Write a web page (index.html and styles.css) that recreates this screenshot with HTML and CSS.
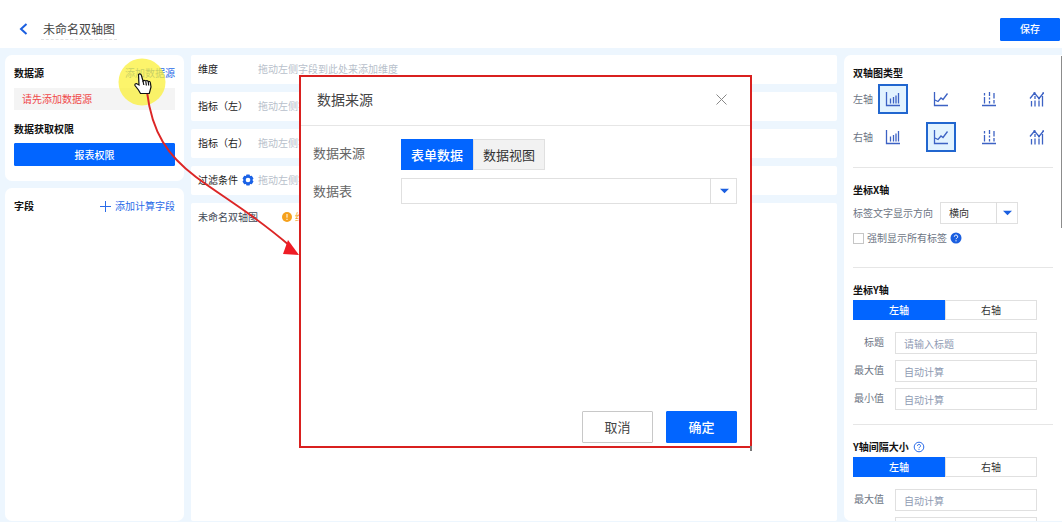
FILE: index.html
```html
<!DOCTYPE html>
<html lang="zh-CN">
<head>
<meta charset="utf-8">
<title>未命名双轴图</title>
<link rel="stylesheet" href="styles.css">
</head>

<body>

<svg class="symbols">
  <symbol id="bar" viewBox="0 0 16 16"><path d="M1.500 1v13.500H15M5.500 7.500v5M8.500 6v6.500M11 4.500v8M13.500 2v10.500"/></symbol>
  <symbol id="line" viewBox="0 0 16 16"><path d="M1.500 1v13.500H15M2 9l3 1.500 3-3.500 2 1.500L14.500 2.500"/></symbol>
  <symbol id="stack" viewBox="0 0 16 16"><path d="M1 14.500h14M3.500 2v2.500M3.500 6v6.500M8.500 1v4M8.500 6.500v2M8.500 10v2.500M13 2v5.500M13 9v3.500"/></symbol>
  <symbol id="combo" viewBox="0 0 16 16"><path d="M1 7.500L5.500 2l4.500 5.500L14.500 2M2.500 10v5.500M6 5v3M6 9.500v6M10 9.500v6M13.500 5v10.500"/><path d="M4.500 2h2M9 7.500h2M13.500 2h1.500"/></symbol>
  <symbol id="caret" viewBox="0 0 10 6"><path d="M0 .5h10L5 5.500z"/></symbol>
</svg>

<header>
  <button class="back" aria-label="返回"><svg width="9" height="12" viewBox="0 0 9 12"><path d="M7.500 1L2 6l5.500 5"/></svg></button>
  <h1>未命名双轴图</h1>
  <button class="primary save">保存</button>
</header>

<main>
  <aside class="left">
    <section class="panel source">
      <div class="head"><h2>数据源</h2><a href="#">添加数据源</a></div>
      <p class="warn">请先添加数据源</p>
      <h2>数据获取权限</h2>
      <button class="primary wide">报表权限</button>
    </section>
    <section class="panel fields">
      <div class="head">
        <h2>字段</h2>
        <a href="#"><svg width="11" height="11" viewBox="0 0 11 11"><path d="M5.500 0v11M0 5.500h11"/></svg>添加计算字段</a>
      </div>
    </section>
  </aside>

  <div class="middle">
    <div class="drop"><b>维度</b><span>拖动左侧字段到此处来添加维度</span></div>
    <div class="drop"><b>指标（左）</b><span>拖动左侧字段</span></div>
    <div class="drop"><b>指标（右）</b><span>拖动左侧字段</span></div>
    <div class="drop">
      <b>过滤条件 <svg class="gear" width="12" height="12" viewBox="0 0 12 12"><path d="M4.500 .5h3l.6 1.600 1.700-.3 1.700 2.700L10.400 6l1.100 1.500-1.700 2.700-1.700-.3-.6 1.600h-3l-.6-1.600-1.700.3L.5 7.500 1.600 6 .5 4.500l1.700-2.700 1.700.3z"/><circle cx="6" cy="6" r="2.300"/></svg></b>
      <span>拖动左侧字段</span>
    </div>
    <div class="chart">
      <span>未命名双轴图</span>
      <em><svg width="10" height="10" viewBox="0 0 10 10"><circle cx="5" cy="5" r="5"/><path d="M5 2v3.700M5 6.800V8"/></svg>维度</em>
    </div>
  </div>

  <aside class="panel right">
    <section>
      <h2>双轴图类型</h2>
      <div class="types">
        <span>左轴</span>
        <button class="on" aria-label="柱形图"><svg><use href="#bar"/></svg></button>
        <button aria-label="折线图"><svg><use href="#line"/></svg></button>
        <button aria-label="堆积图"><svg><use href="#stack"/></svg></button>
        <button aria-label="组合图"><svg><use href="#combo"/></svg></button>
      </div>
      <div class="types">
        <span>右轴</span>
        <button aria-label="柱形图"><svg><use href="#bar"/></svg></button>
        <button class="on" aria-label="折线图"><svg><use href="#line"/></svg></button>
        <button aria-label="堆积图"><svg><use href="#stack"/></svg></button>
        <button aria-label="组合图"><svg><use href="#combo"/></svg></button>
      </div>
    </section>

    <section class="xaxis">
      <h2>坐标X轴</h2>
      <div class="direction">
        <label for="dir">标签文字显示方向</label>
        <div class="select small">
          <select id="dir"><option>横向</option><option>纵向</option></select>
          <i><svg><use href="#caret"/></svg></i>
        </div>
      </div>
      <div class="force">
        <input type="checkbox" id="force"><label for="force">强制显示所有标签</label>
        <svg class="help solid" width="12" height="12" viewBox="0 0 12 12"><circle cx="6" cy="6" r="5.500"/><path d="M4.300 4.700a1.700 1.700 0 1 1 2.500 1.500q-.8.4-.8 1M6 8.200v1.200"/></svg>
      </div>
    </section>

    <section>
      <h2>坐标Y轴</h2>
      <div class="tabs"><button class="on">左轴</button><button>右轴</button></div>
      <div class="field"><label for="title">标题</label><input id="title" placeholder="请输入标题"></div>
      <div class="field"><label for="max">最大值</label><input id="max" placeholder="自动计算"></div>
      <div class="field"><label for="min">最小值</label><input id="min" placeholder="自动计算"></div>
    </section>

    <section>
      <h2>Y轴间隔大小 <svg class="help" width="12" height="12" viewBox="0 0 12 12"><circle cx="6" cy="6" r="4.800"/><path d="M4.500 4.900a1.500 1.500 0 1 1 2.200 1.300q-.7.4-.7.900M6 7.900v1"/></svg></h2>
      <div class="tabs"><button class="on">左轴</button><button>右轴</button></div>
      <div class="field"><label for="stepmax">最大值</label><input id="stepmax" placeholder="自动计算"></div>
      <div class="field"><label></label><input aria-label="最小值"></div>
    </section>
    <div class="scroll"></div>
  </aside>
</main>

<!-- guide: click here, then the dialog opens -->
<svg class="guide" width="310" height="270" viewBox="0 0 310 270">
  <circle cx="142" cy="82" r="23.500"/>
  <path class="curve" d="M147 92C152 133 168 156 196 177S252 213 290 246"/>
  <path class="tip" d="M288 240l-5 14 16 1z"/>
  <path class="hand" d="M138.500 74.500q1.500-1.500 2.800.5l1.700 6q1-1.200 2.600 0 1.500-1 2.600.5 1.800-.5 2.200 1.300l.6 4.200-1.700 6.500h-8.800l-2-3.500-3.500-4.500q-.5-2 1.500-2l2.500 1.500z"/>
  <path class="hand" d="M143 81l.8 4M145.800 81.500l.6 4M148.300 82l.4 3.500"/>
</svg>

<div class="dialog" role="dialog" aria-labelledby="dlg">
  <div class="bar">
    <h3 id="dlg">数据来源</h3>
    <button class="close" aria-label="关闭"><svg width="11" height="11" viewBox="0 0 11 11"><path d="M.5.5l10 10M10.500.5l-10 10"/></svg></button>
  </div>
  <div class="body">
    <div class="row"><span>数据来源</span><div class="switch"><button class="on">表单数据</button><button>数据视图</button></div></div>
    <div class="row">
      <label for="table">数据表</label>
      <div class="select">
        <select id="table"><option></option></select>
        <i><svg><use href="#caret"/></svg></i>
      </div>
    </div>
  </div>
  <div class="foot"><button>取消</button><button class="primary">确定</button></div>
</div>

</body>
</html>
```
FILE: styles.css
```css
* {
  box-sizing: border-box;
}

body {
  margin: 0;
  height: 100vh;
  overflow: hidden;
  display: flex;
  flex-direction: column;
  position: relative;
  background: #edf6fe;
  font: 10px/16px "Noto Sans CJK SC", sans-serif;
  color: #222;
}

h1, h2, h3, p {
  margin: 0;
}

h2 {
  font-size: 10px;
  font-weight: bold;
  color: #111;
}

a {
  color: #2a6be8;
  text-decoration: none;
}

button, input, select {
  font: inherit;
  color: inherit;
  margin: 0;
  padding: 0;
  border: 1px solid #e0e0e0;
  border-radius: 0;
  background: #fff;
}

svg {
  fill: none;
  stroke: currentColor;
}

.symbols {
  display: none;
}

.primary {
  background: #0265ff;
  border-color: #0265ff;
  border-radius: 1px;
  color: #fff;
  font-weight: 500;
}

/* top bar */
header {
  display: flex;
  align-items: center;
  flex: none;
  height: 48px;
  padding: 10px 2px 0 19px;
  background: #fff;
}

.back {
  border: 0;
  display: flex;
  margin-right: 13px;
  color: #1b5fe0;
}

.back svg {
  stroke-width: 2;
}

header h1 {
  padding: 0 2px;
  font-size: 12px;
  font-weight: normal;
  line-height: 20px;
  color: #444;
  border-bottom: 1px dashed #e2e2e2;
}

.save {
  margin-left: auto;
  width: 60px;
  height: 23px;
}

/* columns */
main {
  flex: 1;
  min-height: 0;
  display: flex;
  gap: 7px;
  padding: 7px 0 1px 5px;
}

.panel {
  background: #fff;
  border-radius: 7px;
  padding: 10px 9px 15px;
}

.left {
  width: 179px;
  display: flex;
  flex-direction: column;
  gap: 7px;
}

.fields {
  flex: 1;
}

.head {
  display: flex;
  justify-content: space-between;
}

.head a {
  display: flex;
  align-items: center;
  gap: 4px;
}

.warn {
  margin: 7px 0 11px;
  padding: 3px 8px;
  background: #f4f4f4;
  color: #f0484a;
}

.wide {
  display: block;
  width: 100%;
  height: 23px;
  margin-top: 6px;
}

.middle {
  flex: 1;
  min-width: 0;
  display: flex;
  flex-direction: column;
  gap: 8px;
}

.drop, .chart {
  display: flex;
  background: #fff;
  border-radius: 2px;
  padding: 6px 7px 7px;
}

.drop b {
  width: 60px;
  font-weight: normal;
  display: flex;
  align-items: center;
  gap: 4px;
}

.drop span {
  color: #b8bfcb;
}

.gear {
  fill: #1b62e6;
  stroke: none;
}

.gear circle {
  fill: #fff;
}

.chart {
  flex: 1;
  gap: 24px;
  color: #444b58;
}

.chart em {
  display: flex;
  align-items: center;
  gap: 3px;
  height: 16px;
  font-style: normal;
  color: #f5a11d;
}

.chart circle {
  fill: #f5a11d;
  stroke: none;
}

.chart path {
  stroke: #fff;
}

/* settings */
.right {
  width: 218px;
  position: relative;
  overflow: hidden;
  padding: 0 9px;
  border-radius: 7px 0 0 7px;
  color: #6d7584;
}

.right section {
  padding: 14px 0;
  border-bottom: 1px solid #e6e6e6;
}

.right section:first-child {
  padding: 10px 0 15px;
}

.right .xaxis {
  padding-bottom: 21px;
}

.right h2 {
  display: flex;
  align-items: center;
  gap: 4px;
}

.types {
  display: flex;
  align-items: center;
  gap: 18px;
  margin-top: 3px;
}

.types + .types {
  margin-top: 8px;
}

.types span {
  width: 25px;
  margin-right: -18px;
}

.types button {
  width: 30px;
  height: 30px;
  flex: none;
  display: flex;
  align-items: center;
  justify-content: center;
  border: 2px solid transparent;
  color: #3c62c4;
}

.types .on {
  border-color: #2166cf;
  background: #e2f3ff;
}

.types svg {
  width: 16px;
  height: 16px;
  stroke-width: 1.3;
}

.direction {
  display: flex;
  align-items: center;
  gap: 7px;
  margin-top: 4px;
}

.select {
  position: relative;
  height: 26px;
  flex: 1;
}

.select select {
  appearance: none;
  width: 100%;
  height: 100%;
  padding: 0 8px;
  color: #333;
}

.select i {
  position: absolute;
  top: 0;
  right: 0;
  width: 27px;
  height: 100%;
  border-left: 1px solid #ddd;
  display: flex;
  align-items: center;
  justify-content: center;
  pointer-events: none;
}

.select i svg {
  width: 9px;
  height: 6px;
  fill: #1b5fe0;
  stroke: none;
}

.small {
  flex: none;
  width: 78px;
  height: 22px;
}

.small i {
  width: 22px;
}

.force {
  display: flex;
  align-items: center;
  gap: 3px;
  margin-top: 6px;
}

.force input {
  appearance: none;
  width: 11px;
  height: 11px;
  border-color: #c6c6c6;
}

.help {
  color: #2a6be8;
}

.solid {
  fill: #1b5fe0;
  stroke: none;
}

.solid path {
  fill: none;
  stroke: #fff;
}

.tabs {
  display: flex;
  height: 20px;
  margin: 2px 16px 12px 0;
}

.tabs button {
  flex: 1;
  color: #333;
}

.tabs .on, .switch .on {
  background: #0265ff;
  border-color: #0265ff;
  color: #fff;
  font-weight: 500;
}

.field {
  display: flex;
  margin: 6px 16px 0 0;
}

.field label {
  width: 31px;
  margin-right: 11px;
  padding-top: 2px;
  text-align: right;
}

.field input {
  flex: 1;
  min-width: 0;
  height: 22px;
  padding: 0 8px;
}

.field input::placeholder {
  color: #8f9bb3;
}

.scroll {
  position: absolute;
  top: 1px;
  right: 0;
  width: 1px;
  height: 172px;
  background: #8c8c8c;
}

/* pointer and arrow */
.guide {
  position: absolute;
  top: 0;
  left: 0;
  pointer-events: none;
}

.guide circle {
  fill: #fbf03a;
  fill-opacity: 0.75;
  stroke: none;
}

.curve {
  stroke: #dc2626;
  stroke-width: 2;
}

.tip {
  fill: #ee1c25;
  stroke: none;
}

.hand {
  fill: #fff;
  stroke: #111;
  stroke-width: 1.2;
}

/* dialog */
.dialog {
  position: absolute;
  left: 299px;
  top: 75px;
  width: 453px;
  height: 373px;
  display: flex;
  flex-direction: column;
  background: #fff;
  border: 2px solid #d9201f;
  font-size: 13px;
  color: #666;
}

.dialog::after {
  content: "";
  position: absolute;
  top: 100%;
  right: -2px;
  width: 2px;
  height: 5px;
  background: #777;
}

.bar {
  display: flex;
  align-items: center;
  justify-content: space-between;
  height: 49px;
  padding: 0 23px 4px 16px;
  border-bottom: 1px solid #e6e6e6;
}

.bar h3 {
  font-size: 14px;
  font-weight: normal;
  color: #444;
}

.close {
  display: flex;
  border: 0;
  color: #888;
}

.body {
  flex: 1;
  padding: 13px 13px 0 12px;
}

.row {
  display: flex;
  align-items: center;
  margin-bottom: 8px;
}

.row > :first-child {
  width: 88px;
}

.row > span {
  padding-bottom: 4px;
}

.switch {
  display: flex;
}

.switch button {
  width: 72px;
  height: 31px;
  background: #f2f2f2;
  color: #333;
}

.foot {
  display: flex;
  justify-content: flex-end;
  gap: 13px;
  padding: 0 13px 3px;
}

.foot button {
  width: 71px;
  height: 32px;
  border-radius: 1px;
}

.foot button:not(.primary) {
  border-color: #c8c8c8;
  color: #444;
}
```
